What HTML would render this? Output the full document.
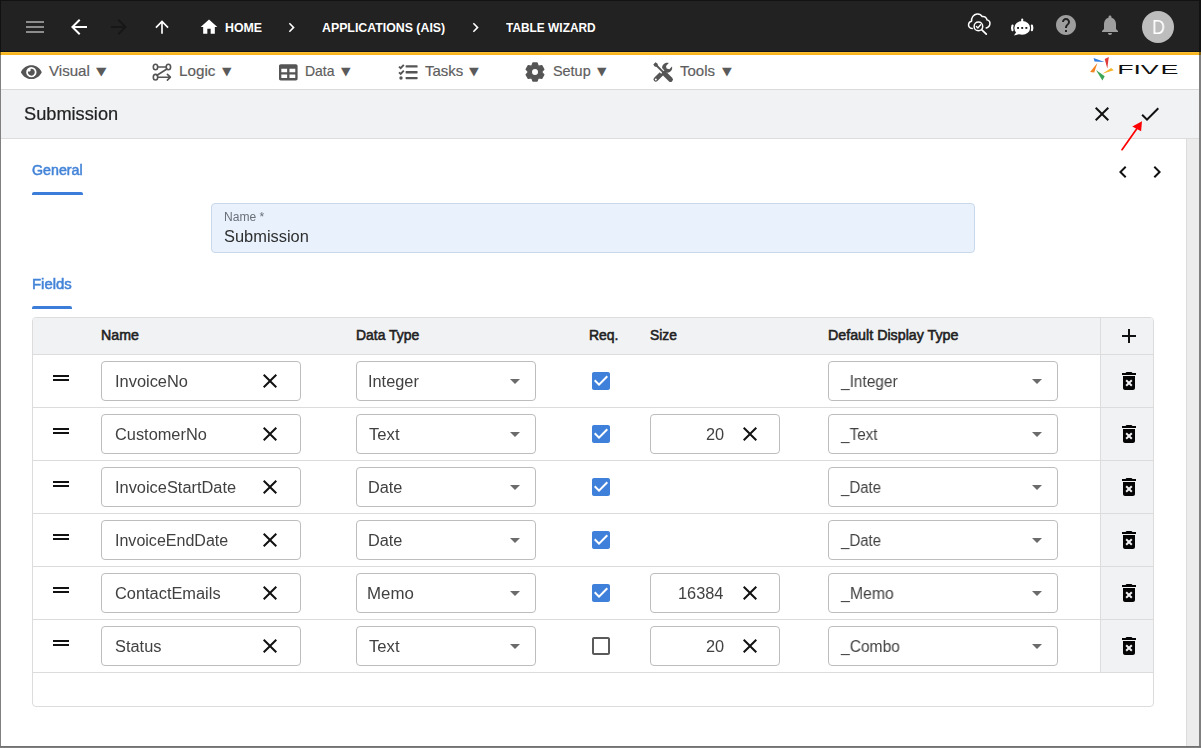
<!DOCTYPE html>
<html lang="en">
<head>
<meta charset="utf-8">
<title>Table Wizard - Submission</title>
<style>
*{box-sizing:border-box;margin:0;padding:0}
html,body{width:1201px;height:748px;overflow:hidden;background:#fff;font-family:"Liberation Sans",sans-serif}
#app{position:relative;width:1201px;height:748px;overflow:hidden;background:#fff}
#app div,#app span,#app svg,#app header,#app nav,#app section,#app main{position:absolute}
.grp{left:0;top:0;width:0;height:0}
.t{white-space:nowrap;line-height:20px;height:20px;transform-origin:0 50%;display:block}
.b{font-weight:bold}
.arrow{font-family:"DejaVu Sans",sans-serif;color:#5a5a5a}
.val,.title,.fvalue,.flabel,.tab,.avatar-letter{will-change:transform}
.menu-label,.title{-webkit-text-stroke:0.2px currentColor}
.th{-webkit-text-stroke:0.55px currentColor}
.tab{-webkit-text-stroke:0.5px currentColor}
#topbar{left:0;top:0;width:1201px;height:52px;background:#222;border-top:1px solid #121212;border-bottom:1px solid #10141b}
#yellow{left:0;top:52px;width:1201px;height:3px;background:#f6b521;border-top:1px solid #fcc030}
#menubar{left:0;top:55px;width:1201px;height:35px;background:#fff;border-bottom:1px solid #dadada}
#titlebar{left:0;top:90px;width:1201px;height:49px;background:#f1f2f4;border-bottom:1px solid #dcdcdc}
#sbar{left:1186px;top:139px;width:13px;height:607px;background:#ececec;border-left:1px solid #dcdcdc}
#frameL{left:0;top:0;width:1px;height:748px;background:#808080}
#frameL2{left:0;top:0;width:1px;height:55px;background:#111;border-bottom:3px solid #7f6010}
#frameR{left:1199px;top:0;width:2px;height:748px;background:#7f7f7f}
#frameR2{left:1199px;top:0;width:2px;height:55px;background:#121212;border-bottom:3px solid #7f6010}
#frameB{left:0;top:746px;width:1201px;height:2px;background:#7f7f7f;border-top:1px solid #717171}
.uline{height:3px;background:#3b7dd8;border-radius:2px 2px 0 0}
#avatar{left:1142px;top:11px;width:32px;height:32px;border-radius:50%;background:#bdbdbd}
#namefield{left:211px;top:203px;width:764px;height:50px;background:#e8f1fc;border:1px solid #c8d9ec;border-radius:4px}
#tbl{left:32px;top:317px;width:1122px;height:390px;border:1px solid #dcdcdc;border-radius:4px;background:#fff}
#thead{left:33px;top:318px;width:1120px;height:37px;background:#f1f2f4;border-bottom:1px solid #dcdcdc;border-radius:3px 3px 0 0}
#actcol{left:1100px;top:318px;width:53px;height:355px;background:#f1f2f4;border-left:1px solid #dcdcdc;border-radius:0 3px 0 0}
.rl{left:33px;width:1120px;height:1px;background:#dcdcdc}
.box{height:40px;border:1px solid #bdbdbd;border-radius:4px;background:#fff}
.ic{position:absolute;overflow:visible}
</style>
</head>
<body>
<div id="app">

<header class="grp" id="appbar">
<div id="topbar"></div>
<div id="yellow"></div>
<svg class="ic" style="left:23px;top:15px" width="24" height="24" viewBox="0 0 24 24" fill="#8c8c8c" ><path d="M3 18h18v-2H3v2zm0-5h18v-2H3v2zm0-7v2h18V6H3z"/></svg>
<svg class="ic" style="left:67px;top:15px" width="24" height="24" viewBox="0 0 24 24" fill="#fff" ><path d="M20 11H7.83l5.59-5.59L12 4l-8 8 8 8 1.41-1.41L7.83 13H20v-2z"/></svg>
<svg class="ic" style="left:107px;top:15px" width="24" height="24" viewBox="0 0 24 24" fill="#171717" ><path d="M12 4l-1.41 1.41L16.17 11H4v2h12.17l-5.58 5.59L12 20l8-8z"/></svg>
<svg class="ic" style="left:152px;top:17px" width="20" height="20" viewBox="0 0 24 24" fill="#fff" ><path d="M4 12l1.41 1.41L11 7.83V20h2V7.83l5.58 5.59L20 12l-8-8-8 8z"/></svg>
<svg class="ic" style="left:199px;top:17px" width="20" height="20" viewBox="0 0 24 24" fill="#fff" ><path d="M10 20v-6h4v6h5v-8h3L12 3 2 12h3v8z"/></svg>
<svg class="ic" style="left:282.3px;top:17.7px" width="19" height="19" viewBox="0 0 24 24" fill="#fff" ><path d="M10 6L8.59 7.41 13.17 12l-4.58 4.59L10 18l6-6z"/></svg>
<svg class="ic" style="left:466px;top:17.7px" width="19" height="19" viewBox="0 0 24 24" fill="#fff" ><path d="M10 6L8.59 7.41 13.17 12l-4.58 4.59L10 18l6-6z"/></svg>
<svg class="ic" style="left:966px;top:11px" width="26" height="26" viewBox="0 0 26 26" fill="none" stroke="#fff" stroke-width="1.5" stroke-linecap="round" stroke-linejoin="round">
<path d="M6.2 17.6 C3.6 17.4 2.2 15.4 2.6 13.2 C2.9 11.5 4.2 10.4 5.6 10.2 C5.2 6.6 7.6 3.4 11 3 C13.2 2.8 15.2 3.9 16.200 5.600 C18.400 5.100 20.600 6.500 21 8.900 C23.200 9.500 24.300 11.500 23.800 13.600 C23.400 15.400 22 16.600 20.200 16.900"/>
<circle cx="12.4" cy="15.400" r="4.300"/>
<path d="M10.400 15.400 L11.900 16.900 L14.600 13.800" stroke-width="1.400"/>
<path d="M15.600 18.600 L20.300 23.200" stroke-width="1.700"/>
</svg>
<svg class="ic" style="left:1010px;top:17px" width="24" height="20" viewBox="0 0 24 20">
<g fill="#fff">
<ellipse cx="12.200" cy="10.900" rx="7.900" ry="6.800"/>
<path d="M11.200 2.600 a1 1 0 0 1 2 0 V5 h-2Z"/>
<path d="M6.600 14.600 L4 18.500 L10.500 16.800 Z"/>
</g>
<g fill="none" stroke="#fff" stroke-width="2.200" stroke-linecap="round"><path d="M2.500 8.600 Q1.700 10.900 2.500 13.200"/><path d="M21.900 8.600 Q22.700 10.900 21.900 13.200"/></g>
<g fill="#212121"><rect x="7.100" y="10" width="1.900" height="1.900"/><rect x="11.250" y="10" width="1.900" height="1.900"/><rect x="15.400" y="10" width="1.900" height="1.900"/></g>
</svg>
<svg class="ic" style="left:1054px;top:13px" width="24" height="24" viewBox="0 0 24 24" fill="#9e9e9e" ><path d="M12 2C6.48 2 2 6.48 2 12s4.48 10 10 10 10-4.48 10-10S17.52 2 12 2zm1 17h-2v-2h2v2zm2.07-7.75l-.9.92C13.45 12.9 13 13.5 13 15h-2v-.5c0-1.1.45-2.1 1.17-2.83l1.24-1.26c.37-.36.59-.86.59-1.41 0-1.1-.9-2-2-2s-2 .9-2 2H8c0-2.21 1.79-4 4-4s4 1.79 4 4c0 .88-.36 1.68-.93 2.25z"/></svg>
<svg class="ic" style="left:1098px;top:13px" width="24" height="24" viewBox="0 0 24 24" fill="#9e9e9e" ><path d="M12 22c1.1 0 2-.9 2-2h-4c0 1.1.89 2 2 2zm6-6v-5c0-3.07-1.64-5.64-4.5-6.320V4c0-.83-.67-1.500-1.500-1.500s-1.500.67-1.500 1.500v.68C7.630 5.360 6 7.920 6 11v5l-2 2v1h16v-1l-2-2z"/></svg>
<div id="avatar"></div>
<span class="t crumb b" style="left:225.13px;top:17.9px;font-size:13px;color:#fff;transform:scaleX(0.9513)">HOME</span>
<span class="t crumb b" style="left:322.21px;top:17.9px;font-size:13px;color:#fff;transform:scaleX(0.9490)">APPLICATIONS (AIS)</span>
<span class="t crumb b" style="left:506.10px;top:17.9px;font-size:13px;color:#fff;transform:scaleX(0.9158)">TABLE WIZARD</span>
<span class="t avatar-letter" style="left:1151.60px;top:17.3px;font-size:20px;color:#fff;transform:scaleX(0.8944)">D</span>
</header>
<nav class="grp" id="menu">
<div id="menubar"></div>
<svg class="ic" style="left:21.100px;top:63px" width="20.700" height="18.400" viewBox="0 0 576 512" fill="#555"><path d="M572.520 241.400C518.290 135.590 410.930 64 288 64S57.680 135.640 3.480 241.410a32.350 32.350 0 0 0 0 29.190C57.710 376.410 165.070 448 288 448s230.320-71.640 284.520-177.410a32.350 32.350 0 0 0 0-29.190zM288 400a144 144 0 1 1 144-144 143.930 143.930 0 0 1-144 144zm0-240a95.310 95.310 0 0 0-25.310 3.790 47.850 47.850 0 0 1-66.900 66.900A95.780 95.780 0 1 0 288 160z"/></svg>
<svg class="ic" style="left:151px;top:62px" width="22" height="20" viewBox="0 0 22 20" fill="none" stroke="#555" stroke-width="1.600" stroke-linecap="round" stroke-linejoin="round">
<ellipse cx="4.500" cy="5" rx="2.200" ry="2.800"/><ellipse cx="17.400" cy="5" rx="2.200" ry="2.800"/><ellipse cx="4.500" cy="15.200" rx="2.200" ry="2.800"/>
<path d="M6.700 5 H15.200 M15.900 7 L6 13.200 M6.700 15.200 H19.200 M16.400 12.300 L19.400 15.200 L16.400 18.100"/>
</svg>
<svg class="ic" style="left:278.700px;top:62.600px" width="18.600" height="18.600" viewBox="0 0 512 512" fill="#555"><path d="M464 32H48C21.490 32 0 53.490 0 80v352c0 26.510 21.490 48 48 48h416c26.510 0 48-21.490 48-48V80c0-26.510-21.490-48-48-48zM224 416H64v-96h160v96zm0-160H64v-96h160v96zm224 160H288v-96h160v96zm0-160H288v-96h160v96z"/></svg>
<svg class="ic" style="left:398px;top:62px" width="21" height="20" viewBox="0 0 21 20">
<g fill="#555"><rect x="7.600" y="3.300" width="12" height="2.300" rx="0.600"/><rect x="7.600" y="9.100" width="12" height="2.300" rx="0.600"/><rect x="7.600" y="14.900" width="12" height="2.300" rx="0.600"/><circle cx="3" cy="16" r="1.700"/></g>
<g fill="none" stroke="#555" stroke-width="1.900"><path d="M1 4.600 L2.700 6.200 L5.800 2.800"/><path d="M1 10.400 L2.700 12 L5.800 8.600"/></g>
</svg>
<svg class="ic" style="left:524px;top:61px" width="22" height="22" viewBox="0 0 22 22" fill="#555" fill-rule="evenodd" stroke="#555" stroke-width="1.200" stroke-linejoin="round"><path d="M7.80 4.89 L8.88 1.95 L13.12 1.95 L14.20 4.89 L14.70 5.17 L17.78 4.63 L19.90 8.31 L17.89 10.71 L17.89 11.29 L19.90 13.69 L17.78 17.37 L14.70 16.83 L14.20 17.11 L13.12 20.05 L8.88 20.05 L7.80 17.11 L7.30 16.83 L4.22 17.37 L2.10 13.69 L4.11 11.29 L4.11 10.71 L2.10 8.31 L4.22 4.63 L7.30 5.17Z M7.40 11.00 a3.6 3.6 0 1 0 7.2 0 a3.6 3.6 0 1 0 -7.2 0Z"/></svg>
<svg class="ic" style="left:652px;top:61px" width="22" height="22" viewBox="0 0 22 22">
<path d="M3.800 18.400 L12.400 9.800" stroke="#555" stroke-width="4.600" stroke-linecap="round" fill="none"/>
<path d="M13.100 2.300 C10.400 3.300 9.300 6.600 10.900 9.100 L12.900 11.100 C15.400 12.700 18.900 11.500 19.900 8.600 C20.300 7.500 20.300 6.400 20 5.500 L17.300 8.200 L14.600 7.600 L14 4.900 L16.800 2.100 C15.600 1.700 14.300 1.800 13.100 2.300Z" fill="#555"/>
<circle cx="3.800" cy="18.400" r="1" fill="#fff"/>
<path d="M2.600 3 L10.800 11.200 M12.800 13 L18.600 18.800" stroke="#fff" stroke-width="4.600" stroke-linecap="butt" fill="none"/>
<path d="M1.300 3.500 L3.500 1.300 L5.600 2.700 L6 4.600 L11.600 10.200 L10.200 11.600 L4.600 6 L2.700 5.600Z" fill="#555"/>
<path d="M12.700 12.700 L18.500 18.500" stroke="#555" stroke-width="4.800" stroke-linecap="round" fill="none"/>
<path d="M10.600 10.600 L13 13" stroke="#555" stroke-width="2.600" fill="none"/>
</svg>
<span class="t arrow" style="left:95.6px;top:62.06px;font-size:11.3px;transform:scaleX(1.207)">▼</span>
<span class="t arrow" style="left:221.5px;top:62.06px;font-size:11.3px;transform:scaleX(1.092)">▼</span>
<span class="t arrow" style="left:341.4px;top:62.06px;font-size:11.3px;transform:scaleX(1.103)">▼</span>
<span class="t arrow" style="left:469.2px;top:62.06px;font-size:11.3px;transform:scaleX(1.126)">▼</span>
<span class="t arrow" style="left:596.5px;top:62.06px;font-size:11.3px;transform:scaleX(1.092)">▼</span>
<span class="t arrow" style="left:721.5px;top:62.06px;font-size:11.3px;transform:scaleX(1.126)">▼</span>
<svg class="ic" style="left:1088px;top:55px" width="92" height="30" viewBox="1088 55 92 30">
<path d="M1093.600 58 L1094.500 61.600 L1104.500 62.100Z" fill="#2f7de1"/>
<path d="M1108.800 57 L1104.700 58.900 L1107.300 68.500Z" fill="#e03a3a"/>
<path d="M1111.100 68 L1113.900 70.300 L1102.400 73.800Z" fill="#f8b62b"/>
<path d="M1096 69.900 L1104.700 76.300 L1102.400 80.400Z" fill="#3aa655"/>
<path d="M1097.400 63 L1094.200 72.600 L1090.100 72.100Z" fill="#f58220"/>
<text transform="translate(1117 73.9) scale(2.05 1)" x="0.18 8.02 11.6 21.2" y="0" font-family="'Liberation Sans', sans-serif" font-size="13.100" fill="#111">FIVE</text>
</svg>
<span class="t menu-label m" style="left:49.30px;top:60.8px;font-size:14.5px;color:#5e5e5e;transform:scaleX(1.0396)">Visual</span>
<span class="t menu-label m" style="left:178.71px;top:60.8px;font-size:14.5px;color:#5e5e5e;transform:scaleX(1.0506)">Logic</span>
<span class="t menu-label m" style="left:304.90px;top:60.8px;font-size:14.5px;color:#5e5e5e;transform:scaleX(0.9635)">Data</span>
<span class="t menu-label m" style="left:424.87px;top:60.8px;font-size:14.5px;color:#5e5e5e;transform:scaleX(1.0332)">Tasks</span>
<span class="t menu-label m" style="left:552.85px;top:60.8px;font-size:14.5px;color:#5e5e5e;transform:scaleX(0.9932)">Setup</span>
<span class="t menu-label m" style="left:680.37px;top:60.8px;font-size:14.5px;color:#5e5e5e;transform:scaleX(1.0339)">Tools</span>
</nav>
<section class="grp" id="formtitle">
<div id="titlebar"></div>
<svg class="ic" style="left:1090px;top:102px" width="24" height="24" viewBox="0 0 24 24" fill="#111" ><path d="M19 6.41L17.59 5 12 10.59 6.41 5 5 6.41 10.59 12 5 17.59 6.41 19 12 13.41 17.59 19 19 17.59 13.41 12z"/></svg>
<svg class="ic" style="left:1138px;top:102px" width="24" height="24" viewBox="0 0 24 24" fill="#111" ><path d="M9 16.17L4.83 12l-1.420 1.410L9 19 21 7l-1.410-1.410z"/></svg>
<span class="t title m" style="left:24.03px;top:103.7px;font-size:18px;color:#222;transform:scaleX(1.0118)">Submission</span>
</section>
<main class="grp" id="content">
<div id="sbar"></div>
<svg class="ic" style="left:1115px;top:115px" width="35" height="40" viewBox="1115 115 35 40"><path d="M1122 149.700 L1137.500 127.700" stroke="#ff0000" stroke-width="1.700" fill="none" stroke-linecap="round"/><path d="M1142 121.200 L1132.300 126.600 L1141.100 131.200Z" fill="#ff0000"/></svg>
<svg class="ic" style="left:1111px;top:160px" width="24" height="24" viewBox="0 0 24 24" fill="#111" ><path d="M15.41 7.41L14 6l-6 6 6 6 1.41-1.41L10.83 12z"/></svg>
<svg class="ic" style="left:1145px;top:160px" width="24" height="24" viewBox="0 0 24 24" fill="#111" ><path d="M10 6L8.59 7.41 13.17 12l-4.58 4.59L10 18l6-6z"/></svg>
<div class="uline" style="left:32px;top:192px;width:51px"></div>
<div class="uline" style="left:32px;top:306px;width:40px"></div>
<div id="namefield"></div>
<div id="tbl"></div><div id="thead"></div><div id="actcol"></div>
<div class="rl" style="top:354px"></div>
<div class="rl" style="top:407px"></div>
<div class="rl" style="top:460px"></div>
<div class="rl" style="top:513px"></div>
<div class="rl" style="top:566px"></div>
<div class="rl" style="top:619px"></div>
<div class="rl" style="top:672px"></div>
<svg class="ic" style="left:1117px;top:324px" width="24" height="24" viewBox="0 0 24 24" fill="#111" ><path d="M19 13h-6v6h-2v-6H5v-2h6V5h2v6h6v2z"/></svg>
<svg class="ic" style="left:49px;top:366px" width="24" height="24" viewBox="0 0 24 24" fill="#111" ><path d="M20 9H4v2h16V9zM4 15h16v-2H4v2z"/></svg>
<div class="box" style="left:101px;top:361px;width:200px"></div>
<svg class="ic" style="left:258px;top:369px" width="24" height="24" viewBox="0 0 24 24" fill="#111" ><path d="M19 6.41L17.59 5 12 10.59 6.41 5 5 6.41 10.59 12 5 17.59 6.41 19 12 13.41 17.59 19 19 17.59 13.41 12z"/></svg>
<div class="box" style="left:356px;top:361px;width:180px"></div>
<svg class="ic" style="left:503px;top:369.4px" width="24" height="24" viewBox="0 0 24 24" fill="#6b6b6b" ><path d="M7 10l5 5 5-5z"/></svg>
<svg class="ic" style="left:589px;top:369px" width="24" height="24" viewBox="0 0 24 24" fill="#3f81da" ><path d="M19 3H5c-1.110 0-2 .9-2 2v14c0 1.100.890 2 2 2h14c1.110 0 2-.9 2-2V5c0-1.100-.890-2-2-2zm-9 14l-5-5 1.410-1.410L10 14.170l7.590-7.590L19 8l-9 9z"/></svg>
<div class="box" style="left:828px;top:361px;width:230px"></div>
<svg class="ic" style="left:1025.3px;top:369.4px" width="24" height="24" viewBox="0 0 24 24" fill="#6b6b6b" ><path d="M7 10l5 5 5-5z"/></svg>
<svg class="ic" style="left:1117px;top:369px" width="24" height="24" viewBox="0 0 24 24" fill="#050505" ><path d="M6 19c0 1.100.9 2 2 2h8c1.100 0 2-.9 2-2V7H6v12zm2.460-7.120l1.410-1.410L12 12.590l2.120-2.120 1.410 1.410L13.410 14l2.120 2.120-1.410 1.410L12 15.410l-2.120 2.120-1.410-1.410L10.590 14l-2.130-2.120zM15.500 4l-1-1h-5l-1 1H5v2h14V4z"/></svg>
<svg class="ic" style="left:49px;top:419px" width="24" height="24" viewBox="0 0 24 24" fill="#111" ><path d="M20 9H4v2h16V9zM4 15h16v-2H4v2z"/></svg>
<div class="box" style="left:101px;top:414px;width:200px"></div>
<svg class="ic" style="left:258px;top:422px" width="24" height="24" viewBox="0 0 24 24" fill="#111" ><path d="M19 6.41L17.59 5 12 10.59 6.41 5 5 6.41 10.59 12 5 17.59 6.41 19 12 13.41 17.59 19 19 17.59 13.41 12z"/></svg>
<div class="box" style="left:356px;top:414px;width:180px"></div>
<svg class="ic" style="left:503px;top:422.4px" width="24" height="24" viewBox="0 0 24 24" fill="#6b6b6b" ><path d="M7 10l5 5 5-5z"/></svg>
<svg class="ic" style="left:589px;top:422px" width="24" height="24" viewBox="0 0 24 24" fill="#3f81da" ><path d="M19 3H5c-1.110 0-2 .9-2 2v14c0 1.100.890 2 2 2h14c1.110 0 2-.9 2-2V5c0-1.100-.890-2-2-2zm-9 14l-5-5 1.410-1.410L10 14.170l7.590-7.590L19 8l-9 9z"/></svg>
<div class="box" style="left:650px;top:414px;width:130px"></div>
<svg class="ic" style="left:737.5px;top:422px" width="24" height="24" viewBox="0 0 24 24" fill="#111" ><path d="M19 6.41L17.59 5 12 10.59 6.41 5 5 6.41 10.59 12 5 17.59 6.41 19 12 13.41 17.59 19 19 17.59 13.41 12z"/></svg>
<div class="box" style="left:828px;top:414px;width:230px"></div>
<svg class="ic" style="left:1025.3px;top:422.4px" width="24" height="24" viewBox="0 0 24 24" fill="#6b6b6b" ><path d="M7 10l5 5 5-5z"/></svg>
<svg class="ic" style="left:1117px;top:422px" width="24" height="24" viewBox="0 0 24 24" fill="#050505" ><path d="M6 19c0 1.100.9 2 2 2h8c1.100 0 2-.9 2-2V7H6v12zm2.460-7.120l1.410-1.410L12 12.590l2.120-2.120 1.410 1.410L13.410 14l2.120 2.120-1.410 1.410L12 15.410l-2.120 2.120-1.410-1.410L10.590 14l-2.130-2.120zM15.500 4l-1-1h-5l-1 1H5v2h14V4z"/></svg>
<svg class="ic" style="left:49px;top:472px" width="24" height="24" viewBox="0 0 24 24" fill="#111" ><path d="M20 9H4v2h16V9zM4 15h16v-2H4v2z"/></svg>
<div class="box" style="left:101px;top:467px;width:200px"></div>
<svg class="ic" style="left:258px;top:475px" width="24" height="24" viewBox="0 0 24 24" fill="#111" ><path d="M19 6.41L17.59 5 12 10.59 6.41 5 5 6.41 10.59 12 5 17.59 6.41 19 12 13.41 17.59 19 19 17.59 13.41 12z"/></svg>
<div class="box" style="left:356px;top:467px;width:180px"></div>
<svg class="ic" style="left:503px;top:475.4px" width="24" height="24" viewBox="0 0 24 24" fill="#6b6b6b" ><path d="M7 10l5 5 5-5z"/></svg>
<svg class="ic" style="left:589px;top:475px" width="24" height="24" viewBox="0 0 24 24" fill="#3f81da" ><path d="M19 3H5c-1.110 0-2 .9-2 2v14c0 1.100.890 2 2 2h14c1.110 0 2-.9 2-2V5c0-1.100-.890-2-2-2zm-9 14l-5-5 1.410-1.410L10 14.170l7.590-7.590L19 8l-9 9z"/></svg>
<div class="box" style="left:828px;top:467px;width:230px"></div>
<svg class="ic" style="left:1025.3px;top:475.4px" width="24" height="24" viewBox="0 0 24 24" fill="#6b6b6b" ><path d="M7 10l5 5 5-5z"/></svg>
<svg class="ic" style="left:1117px;top:475px" width="24" height="24" viewBox="0 0 24 24" fill="#050505" ><path d="M6 19c0 1.100.9 2 2 2h8c1.100 0 2-.9 2-2V7H6v12zm2.460-7.120l1.410-1.410L12 12.590l2.120-2.120 1.410 1.410L13.410 14l2.120 2.120-1.410 1.410L12 15.410l-2.120 2.120-1.410-1.410L10.590 14l-2.130-2.120zM15.500 4l-1-1h-5l-1 1H5v2h14V4z"/></svg>
<svg class="ic" style="left:49px;top:525px" width="24" height="24" viewBox="0 0 24 24" fill="#111" ><path d="M20 9H4v2h16V9zM4 15h16v-2H4v2z"/></svg>
<div class="box" style="left:101px;top:520px;width:200px"></div>
<svg class="ic" style="left:258px;top:528px" width="24" height="24" viewBox="0 0 24 24" fill="#111" ><path d="M19 6.41L17.59 5 12 10.59 6.41 5 5 6.41 10.59 12 5 17.59 6.41 19 12 13.41 17.59 19 19 17.59 13.41 12z"/></svg>
<div class="box" style="left:356px;top:520px;width:180px"></div>
<svg class="ic" style="left:503px;top:528.4px" width="24" height="24" viewBox="0 0 24 24" fill="#6b6b6b" ><path d="M7 10l5 5 5-5z"/></svg>
<svg class="ic" style="left:589px;top:528px" width="24" height="24" viewBox="0 0 24 24" fill="#3f81da" ><path d="M19 3H5c-1.110 0-2 .9-2 2v14c0 1.100.890 2 2 2h14c1.110 0 2-.9 2-2V5c0-1.100-.890-2-2-2zm-9 14l-5-5 1.410-1.410L10 14.170l7.590-7.590L19 8l-9 9z"/></svg>
<div class="box" style="left:828px;top:520px;width:230px"></div>
<svg class="ic" style="left:1025.3px;top:528.4px" width="24" height="24" viewBox="0 0 24 24" fill="#6b6b6b" ><path d="M7 10l5 5 5-5z"/></svg>
<svg class="ic" style="left:1117px;top:528px" width="24" height="24" viewBox="0 0 24 24" fill="#050505" ><path d="M6 19c0 1.100.9 2 2 2h8c1.100 0 2-.9 2-2V7H6v12zm2.460-7.120l1.410-1.410L12 12.590l2.120-2.120 1.410 1.410L13.410 14l2.120 2.120-1.410 1.410L12 15.410l-2.120 2.120-1.410-1.410L10.590 14l-2.130-2.120zM15.500 4l-1-1h-5l-1 1H5v2h14V4z"/></svg>
<svg class="ic" style="left:49px;top:578px" width="24" height="24" viewBox="0 0 24 24" fill="#111" ><path d="M20 9H4v2h16V9zM4 15h16v-2H4v2z"/></svg>
<div class="box" style="left:101px;top:573px;width:200px"></div>
<svg class="ic" style="left:258px;top:581px" width="24" height="24" viewBox="0 0 24 24" fill="#111" ><path d="M19 6.41L17.59 5 12 10.59 6.41 5 5 6.41 10.59 12 5 17.59 6.41 19 12 13.41 17.59 19 19 17.59 13.41 12z"/></svg>
<div class="box" style="left:356px;top:573px;width:180px"></div>
<svg class="ic" style="left:503px;top:581.4px" width="24" height="24" viewBox="0 0 24 24" fill="#6b6b6b" ><path d="M7 10l5 5 5-5z"/></svg>
<svg class="ic" style="left:589px;top:581px" width="24" height="24" viewBox="0 0 24 24" fill="#3f81da" ><path d="M19 3H5c-1.110 0-2 .9-2 2v14c0 1.100.890 2 2 2h14c1.110 0 2-.9 2-2V5c0-1.100-.890-2-2-2zm-9 14l-5-5 1.410-1.410L10 14.170l7.590-7.590L19 8l-9 9z"/></svg>
<div class="box" style="left:650px;top:573px;width:130px"></div>
<svg class="ic" style="left:737.5px;top:581px" width="24" height="24" viewBox="0 0 24 24" fill="#111" ><path d="M19 6.41L17.59 5 12 10.59 6.41 5 5 6.41 10.59 12 5 17.59 6.41 19 12 13.41 17.59 19 19 17.59 13.41 12z"/></svg>
<div class="box" style="left:828px;top:573px;width:230px"></div>
<svg class="ic" style="left:1025.3px;top:581.4px" width="24" height="24" viewBox="0 0 24 24" fill="#6b6b6b" ><path d="M7 10l5 5 5-5z"/></svg>
<svg class="ic" style="left:1117px;top:581px" width="24" height="24" viewBox="0 0 24 24" fill="#050505" ><path d="M6 19c0 1.100.9 2 2 2h8c1.100 0 2-.9 2-2V7H6v12zm2.460-7.120l1.410-1.410L12 12.590l2.120-2.120 1.410 1.410L13.410 14l2.120 2.120-1.410 1.410L12 15.410l-2.120 2.120-1.410-1.410L10.590 14l-2.130-2.120zM15.500 4l-1-1h-5l-1 1H5v2h14V4z"/></svg>
<svg class="ic" style="left:49px;top:631px" width="24" height="24" viewBox="0 0 24 24" fill="#111" ><path d="M20 9H4v2h16V9zM4 15h16v-2H4v2z"/></svg>
<div class="box" style="left:101px;top:626px;width:200px"></div>
<svg class="ic" style="left:258px;top:634px" width="24" height="24" viewBox="0 0 24 24" fill="#111" ><path d="M19 6.41L17.59 5 12 10.59 6.41 5 5 6.41 10.59 12 5 17.59 6.41 19 12 13.41 17.59 19 19 17.59 13.41 12z"/></svg>
<div class="box" style="left:356px;top:626px;width:180px"></div>
<svg class="ic" style="left:503px;top:634.4px" width="24" height="24" viewBox="0 0 24 24" fill="#6b6b6b" ><path d="M7 10l5 5 5-5z"/></svg>
<svg class="ic" style="left:589px;top:634px" width="24" height="24" viewBox="0 0 24 24" fill="#5a5a5a" ><path d="M19 5v14H5V5h14m0-2H5c-1.100 0-2 .9-2 2v14c0 1.100.9 2 2 2h14c1.100 0 2-.9 2-2V5c0-1.100-.9-2-2-2z"/></svg>
<div class="box" style="left:650px;top:626px;width:130px"></div>
<svg class="ic" style="left:737.5px;top:634px" width="24" height="24" viewBox="0 0 24 24" fill="#111" ><path d="M19 6.41L17.59 5 12 10.59 6.41 5 5 6.41 10.59 12 5 17.59 6.41 19 12 13.41 17.59 19 19 17.59 13.41 12z"/></svg>
<div class="box" style="left:828px;top:626px;width:230px"></div>
<svg class="ic" style="left:1025.3px;top:634.4px" width="24" height="24" viewBox="0 0 24 24" fill="#6b6b6b" ><path d="M7 10l5 5 5-5z"/></svg>
<svg class="ic" style="left:1117px;top:634px" width="24" height="24" viewBox="0 0 24 24" fill="#050505" ><path d="M6 19c0 1.100.9 2 2 2h8c1.100 0 2-.9 2-2V7H6v12zm2.460-7.120l1.410-1.410L12 12.590l2.120-2.120 1.410 1.410L13.410 14l2.120 2.120-1.410 1.410L12 15.410l-2.120 2.120-1.410-1.410L10.590 14l-2.130-2.120zM15.500 4l-1-1h-5l-1 1H5v2h14V4z"/></svg>
<span class="t tab m" style="left:32.19px;top:160.0px;font-size:14px;color:#4484d8;transform:scaleX(1.0179)">General</span>
<span class="t tab m" style="left:31.80px;top:274.1px;font-size:14px;color:#4484d8;transform:scaleX(1.0657)">Fields</span>
<span class="t flabel" style="left:223.84px;top:207.2px;font-size:12px;color:#6a6f78;transform:scaleX(1.0053)">Name *</span>
<span class="t fvalue" style="left:224.29px;top:226.5px;font-size:16px;color:#2f2f2f;transform:scaleX(1.0258)">Submission</span>
<span class="t th m" style="left:100.87px;top:325.3px;font-size:14px;color:#212121;transform:scaleX(1.0129)">Name</span>
<span class="t th m" style="left:356.09px;top:325.3px;font-size:14px;color:#212121;transform:scaleX(0.9936)">Data Type</span>
<span class="t th m" style="left:588.88px;top:325.3px;font-size:14px;color:#212121;transform:scaleX(0.9977)">Req.</span>
<span class="t th m" style="left:650.04px;top:325.3px;font-size:14px;color:#212121;transform:scaleX(0.9858)">Size</span>
<span class="t th m" style="left:827.97px;top:325.3px;font-size:14px;color:#212121;transform:scaleX(1.0182)">Default Display Type</span>
<span class="t val" style="left:114.62px;top:371.9px;font-size:16px;color:#414141;transform:scaleX(1.0253)">InvoiceNo</span>
<span class="t val" style="left:367.52px;top:371.9px;font-size:16px;color:#414141;transform:scaleX(1.0209)">Integer</span>
<span class="t val" style="left:841.04px;top:371.9px;font-size:16px;color:#414141;transform:scaleX(0.9646)">_Integer</span>
<span class="t val" style="left:115.13px;top:424.9px;font-size:16px;color:#414141;transform:scaleX(1.0226)">CustomerNo</span>
<span class="t val" style="left:368.54px;top:424.9px;font-size:16px;color:#414141;transform:scaleX(1.0395)">Text</span>
<span class="t val" style="left:841.04px;top:424.9px;font-size:16px;color:#414141;transform:scaleX(0.9547)">_Text</span>
<span class="t val" style="left:705.63px;top:424.9px;font-size:16px;color:#414141;transform:scaleX(1.0211)">20</span>
<span class="t val" style="left:114.62px;top:477.9px;font-size:16px;color:#414141;transform:scaleX(1.0242)">InvoiceStartDate</span>
<span class="t val" style="left:367.53px;top:477.9px;font-size:16px;color:#414141;transform:scaleX(1.0189)">Date</span>
<span class="t val" style="left:841.03px;top:477.9px;font-size:16px;color:#414141;transform:scaleX(0.9386)">_Date</span>
<span class="t val" style="left:114.65px;top:530.9px;font-size:16px;color:#414141;transform:scaleX(1.0021)">InvoiceEndDate</span>
<span class="t val" style="left:367.53px;top:530.9px;font-size:16px;color:#414141;transform:scaleX(1.0189)">Date</span>
<span class="t val" style="left:841.03px;top:530.9px;font-size:16px;color:#414141;transform:scaleX(0.9386)">_Date</span>
<span class="t val" style="left:115.13px;top:583.9px;font-size:16px;color:#414141;transform:scaleX(1.0236)">ContactEmails</span>
<span class="t val" style="left:367.48px;top:583.9px;font-size:16px;color:#414141;transform:scaleX(1.0528)">Memo</span>
<span class="t val" style="left:841.05px;top:583.9px;font-size:16px;color:#414141;transform:scaleX(0.9877)">_Memo</span>
<span class="t val" style="left:678.38px;top:583.9px;font-size:16px;color:#414141;transform:scaleX(1.0210)">16384</span>
<span class="t val" style="left:115.39px;top:636.9px;font-size:16px;color:#414141;transform:scaleX(1.0235)">Status</span>
<span class="t val" style="left:368.54px;top:636.9px;font-size:16px;color:#414141;transform:scaleX(1.0395)">Text</span>
<span class="t val" style="left:841.04px;top:636.9px;font-size:16px;color:#414141;transform:scaleX(0.9737)">_Combo</span>
<span class="t val" style="left:705.63px;top:636.9px;font-size:16px;color:#414141;transform:scaleX(1.0211)">20</span>
</main>
<div id="frameL"></div><div id="frameL2"></div><div id="frameR"></div><div id="frameR2"></div><div id="frameB"></div>
</div>
</body>
</html>
